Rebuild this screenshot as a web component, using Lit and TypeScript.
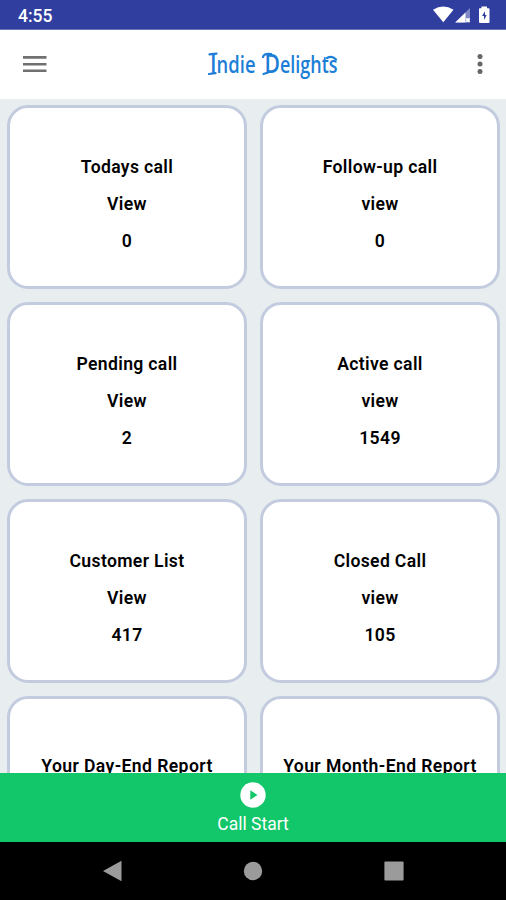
import { LitElement, html, css } from "lit";
import { customElement, property } from "lit/decorators.js";

interface CallCard {
  title: string;
  action: string;
  count: string;
}

const CARDS: CallCard[] = [
  { title: "Todays call", action: "View", count: "0" },
  { title: "Follow-up call", action: "view", count: "0" },
  { title: "Pending call", action: "View", count: "2" },
  { title: "Active call", action: "view", count: "1549" },
  { title: "Customer List", action: "View", count: "417" },
  { title: "Closed Call", action: "view", count: "105" },
  { title: "Your Day-End Report", action: "", count: "" },
  { title: "Your Month-End Report", action: "", count: "" },
];

@customElement("status-bar")
class StatusBar extends LitElement {
  static styles = css`
    :host {
      display: flex;
      justify-content: space-between;
      height: 30px;
      box-sizing: border-box;
      background: #303f9f;
      color: #fff;
      border-bottom: 1px solid #6a76ba;
    }
    .time {
      padding-left: 18px;
      font-size: 17.5px;
      font-weight: 500;
      line-height: 32px;
      height: 29px;
    }
    svg {
      display: block;
    }
  `;
  render() {
    return html`
      <div class="time">4:55</div>
      <svg width="76" height="29" viewBox="430 0 76 29">
        <path d="M433 9.8Q443.3 3 453.5 9.8L443.3 22.3Z" fill="#fff" />
        <path d="M470 8V22.5H455.2Z" fill="#7f88c4" />
        <path d="M465.5 12.6V22.5H455.2Z" fill="#fff" />
        <path d="M466.2 18.3l3.4 3.6m0-3.6l-3.4 3.6" stroke="#fff" stroke-width="1.8" />
        <path
          d="M481.5 8.3H479.7Q479 8.3 479 9.3V22Q479 23 480 23H488.5Q489.5 23 489.5 22V9.3Q489.5 8.3 488.7 8.3H487V6.5H481.5Z"
          fill="#fff"
        />
        <path d="M485.3 10.8L482 16H484V20.1L486.7 14.9H485V10.8Z" fill="#303f9f" />
      </svg>
    `;
  }
}

@customElement("top-bar")
class TopBar extends LitElement {
  static styles = css`
    :host {
      display: grid;
      grid-template-columns: 70px 1fr 70px;
      align-items: center;
      height: 68.5px;
      background: #fff;
    }
    .menu {
      margin-left: 23px;
    }
    .logo {
      justify-self: center;
      margin-left: 46px;
    }
    .more {
      justify-self: end;
      margin-right: 22px;
    }
    svg {
      display: block;
    }
    .word {
      font-family: "Open Sans", "Noto Sans", sans-serif;
      font-size: 23px;
      font-weight: 600;
      fill: #1c7ed6;
    }
    .cap {
      font-size: 27px;
    }
    .flourish {
      fill: none;
      stroke: #1c7ed6;
      stroke-width: 2.2;
      stroke-linecap: round;
    }
  `;
  render() {
    return html`
      <svg class="menu" width="24" height="18" viewBox="0 0 24 18">
        <path d="M0 2.4H23.5M0 9.2H23.5M0 15.8H23.5" stroke="#707070" stroke-width="2.6" />
      </svg>
      <svg class="logo" width="146" height="46" viewBox="203 41.5 146 46">
        <text class="word" x="210" y="73.5" textLength="45.5" lengthAdjust="spacingAndGlyphs"><tspan class="cap">I</tspan>ndie</text>
        <text class="word" x="264.5" y="73.5" textLength="73" lengthAdjust="spacingAndGlyphs"><tspan class="cap">D</tspan>elights</text>
        <path
          class="flourish"
          d="M209.5 54.8L216.5 54.2M209 74.5L215.5 73.6M263 57.5Q264 53.5 271 54.5M263.5 74.5L268 73M327 58.5Q332 55.5 336 60"
        />
      </svg>
      <svg class="more" width="8" height="22" viewBox="0 0 8 22">
        <g fill="#666">
          <circle cx="4" cy="3.5" r="2.5" />
          <circle cx="4" cy="11" r="2.5" />
          <circle cx="4" cy="18.5" r="2.5" />
        </g>
      </svg>
    `;
  }
}

@customElement("call-card")
class CallCardElement extends LitElement {
  @property({ attribute: false }) card!: CallCard;
  static styles = css`
    :host {
      display: flex;
      flex-direction: column;
      align-items: center;
      box-sizing: border-box;
      height: 184px;
      padding-top: 41px;
      border: 3px solid #c3cbdf;
      border-radius: 21px;
      background: #fff;
      color: #000;
      font-size: 17.6px;
      font-weight: 600;
      line-height: 37px;
      letter-spacing: 0.34px;
      white-space: nowrap;
    }
    :host(.report) {
      padding-top: 49px;
      letter-spacing: 0.4px;
    }
  `;
  render() {
    return html`
      <span>${this.card.title}</span>
      <span>${this.card.action}</span>
      <span>${this.card.count}</span>
    `;
  }
}

@customElement("call-start")
class CallStart extends LitElement {
  static styles = css`
    :host {
      display: flex;
      flex-direction: column;
      align-items: center;
      box-sizing: border-box;
      height: 69.5px;
      padding-top: 9px;
      background: #12c66a;
      color: #fff;
      font-size: 17.5px;
      line-height: 24px;
    }
    svg {
      display: block;
      margin-bottom: 4px;
    }
  `;
  render() {
    return html`
      <svg width="26" height="26" viewBox="0 0 26 26">
        <circle cx="13" cy="13" r="12.7" fill="#fff" />
        <path d="M10.3 8.2L17.5 13L10.3 17.8Z" fill="#12c66a" />
      </svg>
      <span>Call Start</span>
    `;
  }
}

@customElement("nav-bar")
class NavBar extends LitElement {
  static styles = css`
    :host {
      display: grid;
      grid-template-columns: repeat(3, 140.5px);
      justify-content: center;
      justify-items: center;
      align-items: center;
      height: 58px;
      background: #000;
    }
    svg {
      display: block;
      fill: #9b9b9b;
    }
  `;
  render() {
    return html`
      <svg width="20" height="22" viewBox="0 0 20 22"><path d="M0 11L18.5 .7V21.3Z" /></svg>
      <svg width="20" height="20" viewBox="0 0 20 20"><circle cx="10" cy="10" r="9.2" /></svg>
      <svg width="20" height="20" viewBox="0 0 20 20"><rect x=".4" y=".4" width="19.2" height="19.2" rx="1" /></svg>
    `;
  }
}

@customElement("app-root")
class AppRoot extends LitElement {
  static styles = css`
    :host {
      display: flex;
      flex-direction: column;
      height: 900px;
      overflow: hidden;
      font-family: Roboto, sans-serif;
      background: #e8edf0;
    }
    .grid {
      flex: 1;
      min-height: 0;
      overflow: hidden;
      display: grid;
      grid-template-columns: 1fr 1fr;
      grid-auto-rows: 184px;
      gap: 13px;
      padding: 6.5px 6px 0 7px;
      align-content: start;
    }
  `;
  render() {
    return html`
      <status-bar></status-bar>
      <top-bar></top-bar>
      <main class="grid">
        ${CARDS.map((card) => html`<call-card class=${card.count ? "" : "report"} .card=${card}></call-card>`)}
      </main>
      <call-start></call-start>
      <nav-bar></nav-bar>
    `;
  }
}
